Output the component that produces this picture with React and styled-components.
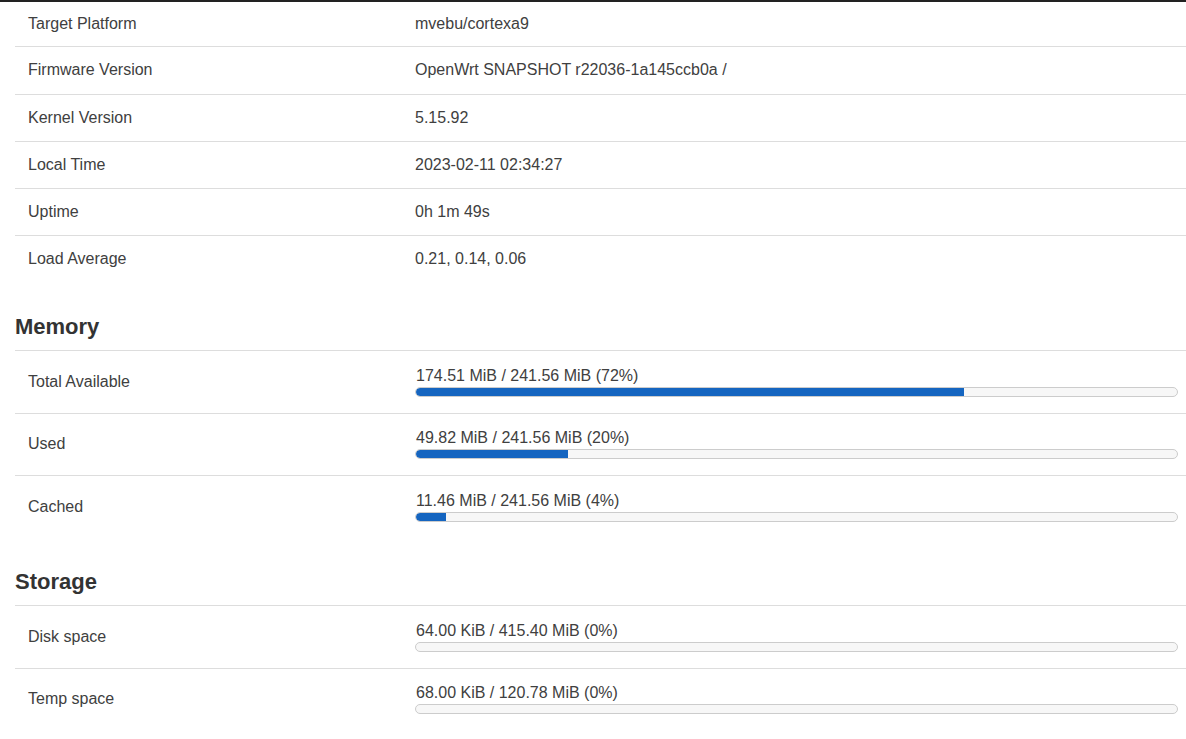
import React from "react";
import styled, { createGlobalStyle } from "styled-components";

const Global = createGlobalStyle`
  html, body { margin: 0; padding: 0; background: #fff; }
  body { font-family: "Liberation Sans", Arial, sans-serif; color: #404040; }
`;

const Page = styled.div`
  width: 1186px;
  overflow: hidden;
`;

const TopBar = styled.div`
  height: 2px;
  background: #222;
`;

const Section = styled.section`
  padding-left: 15px;
`;

const Heading = styled.h3`
  margin: 0;
  height: 68.5px;
  box-sizing: border-box;
  display: flex;
  align-items: flex-end;
  padding-bottom: 10px;
  font-size: 22px;
  line-height: 26px;
  font-weight: bold;
  color: #333;
  border-bottom: 1px solid #ddd;
`;

const Row = styled.div`
  display: grid;
  grid-template-columns: 400px 1fr;
  align-items: center;
  box-sizing: border-box;
  height: ${(p) => p.$h}px;
  border-bottom: ${(p) => (p.$last ? "none" : "1px solid #ddd")};
  font-size: 16px;
`;

const Label = styled.div`
  padding-left: 13px;
`;

const Value = styled.div`
  padding-right: 8px;
`;

const BarText = styled.div`
  line-height: 18px;
  margin-bottom: 2px;
  padding-left: 1px;
`;

const Bar = styled.div`
  height: 10px;
  box-sizing: border-box;
  border: 1px solid #ccc;
  border-radius: 5px;
  background: #f7f7f7;
  overflow: hidden;
`;

const Fill = styled.div`
  height: 100%;
  background: #1565c0;
  border-radius: 4px 0 0 4px;
`;

const sys = [
  ["Target Platform", "mvebu/cortexa9"],
  ["Firmware Version", "OpenWrt SNAPSHOT r22036-1a145ccb0a /"],
  ["Kernel Version", "5.15.92"],
  ["Local Time", "2023-02-11 02:34:27"],
  ["Uptime", "0h 1m 49s"],
  ["Load Average", "0.21, 0.14, 0.06"],
];

const memory = [
  ["Total Available", "174.51 MiB / 241.56 MiB (72%)", 72],
  ["Used", "49.82 MiB / 241.56 MiB (20%)", 20],
  ["Cached", "11.46 MiB / 241.56 MiB (4%)", 4],
];

const storage = [
  ["Disk space", "64.00 KiB / 415.40 MiB (0%)", 0],
  ["Temp space", "68.00 KiB / 120.78 MiB (0%)", 0],
];

function Progress({ text, pct }) {
  return (
    <Value>
      <BarText>{text}</BarText>
      <Bar>
        <Fill style={{ width: `${pct}%` }} />
      </Bar>
    </Value>
  );
}

export default function App() {
  return (
    <Page>
      <Global />
      <TopBar />
      <Section>
        {sys.map(([k, v], i) => (
          <Row key={k} $h={i === 0 ? 45.25 : i === sys.length - 1 ? 46.25 : 47.25} $last={i === sys.length - 1}>
            <Label>{k}</Label>
            <Value>{v}</Value>
          </Row>
        ))}
      </Section>
      <Section>
        <Heading>Memory</Heading>
        {memory.map(([k, v, p], i) => (
          <Row key={k} $h={i === memory.length - 1 ? 61.5 : 62.5} $last={i === memory.length - 1}>
            <Label>{k}</Label>
            <Progress text={v} pct={p} />
          </Row>
        ))}
      </Section>
      <Section>
        <Heading>Storage</Heading>
        {storage.map(([k, v, p], i) => (
          <Row key={k} $h={i === storage.length - 1 ? 61.5 : 62.5} $last={i === storage.length - 1}>
            <Label>{k}</Label>
            <Progress text={v} pct={p} />
          </Row>
        ))}
      </Section>
    </Page>
  );
}
